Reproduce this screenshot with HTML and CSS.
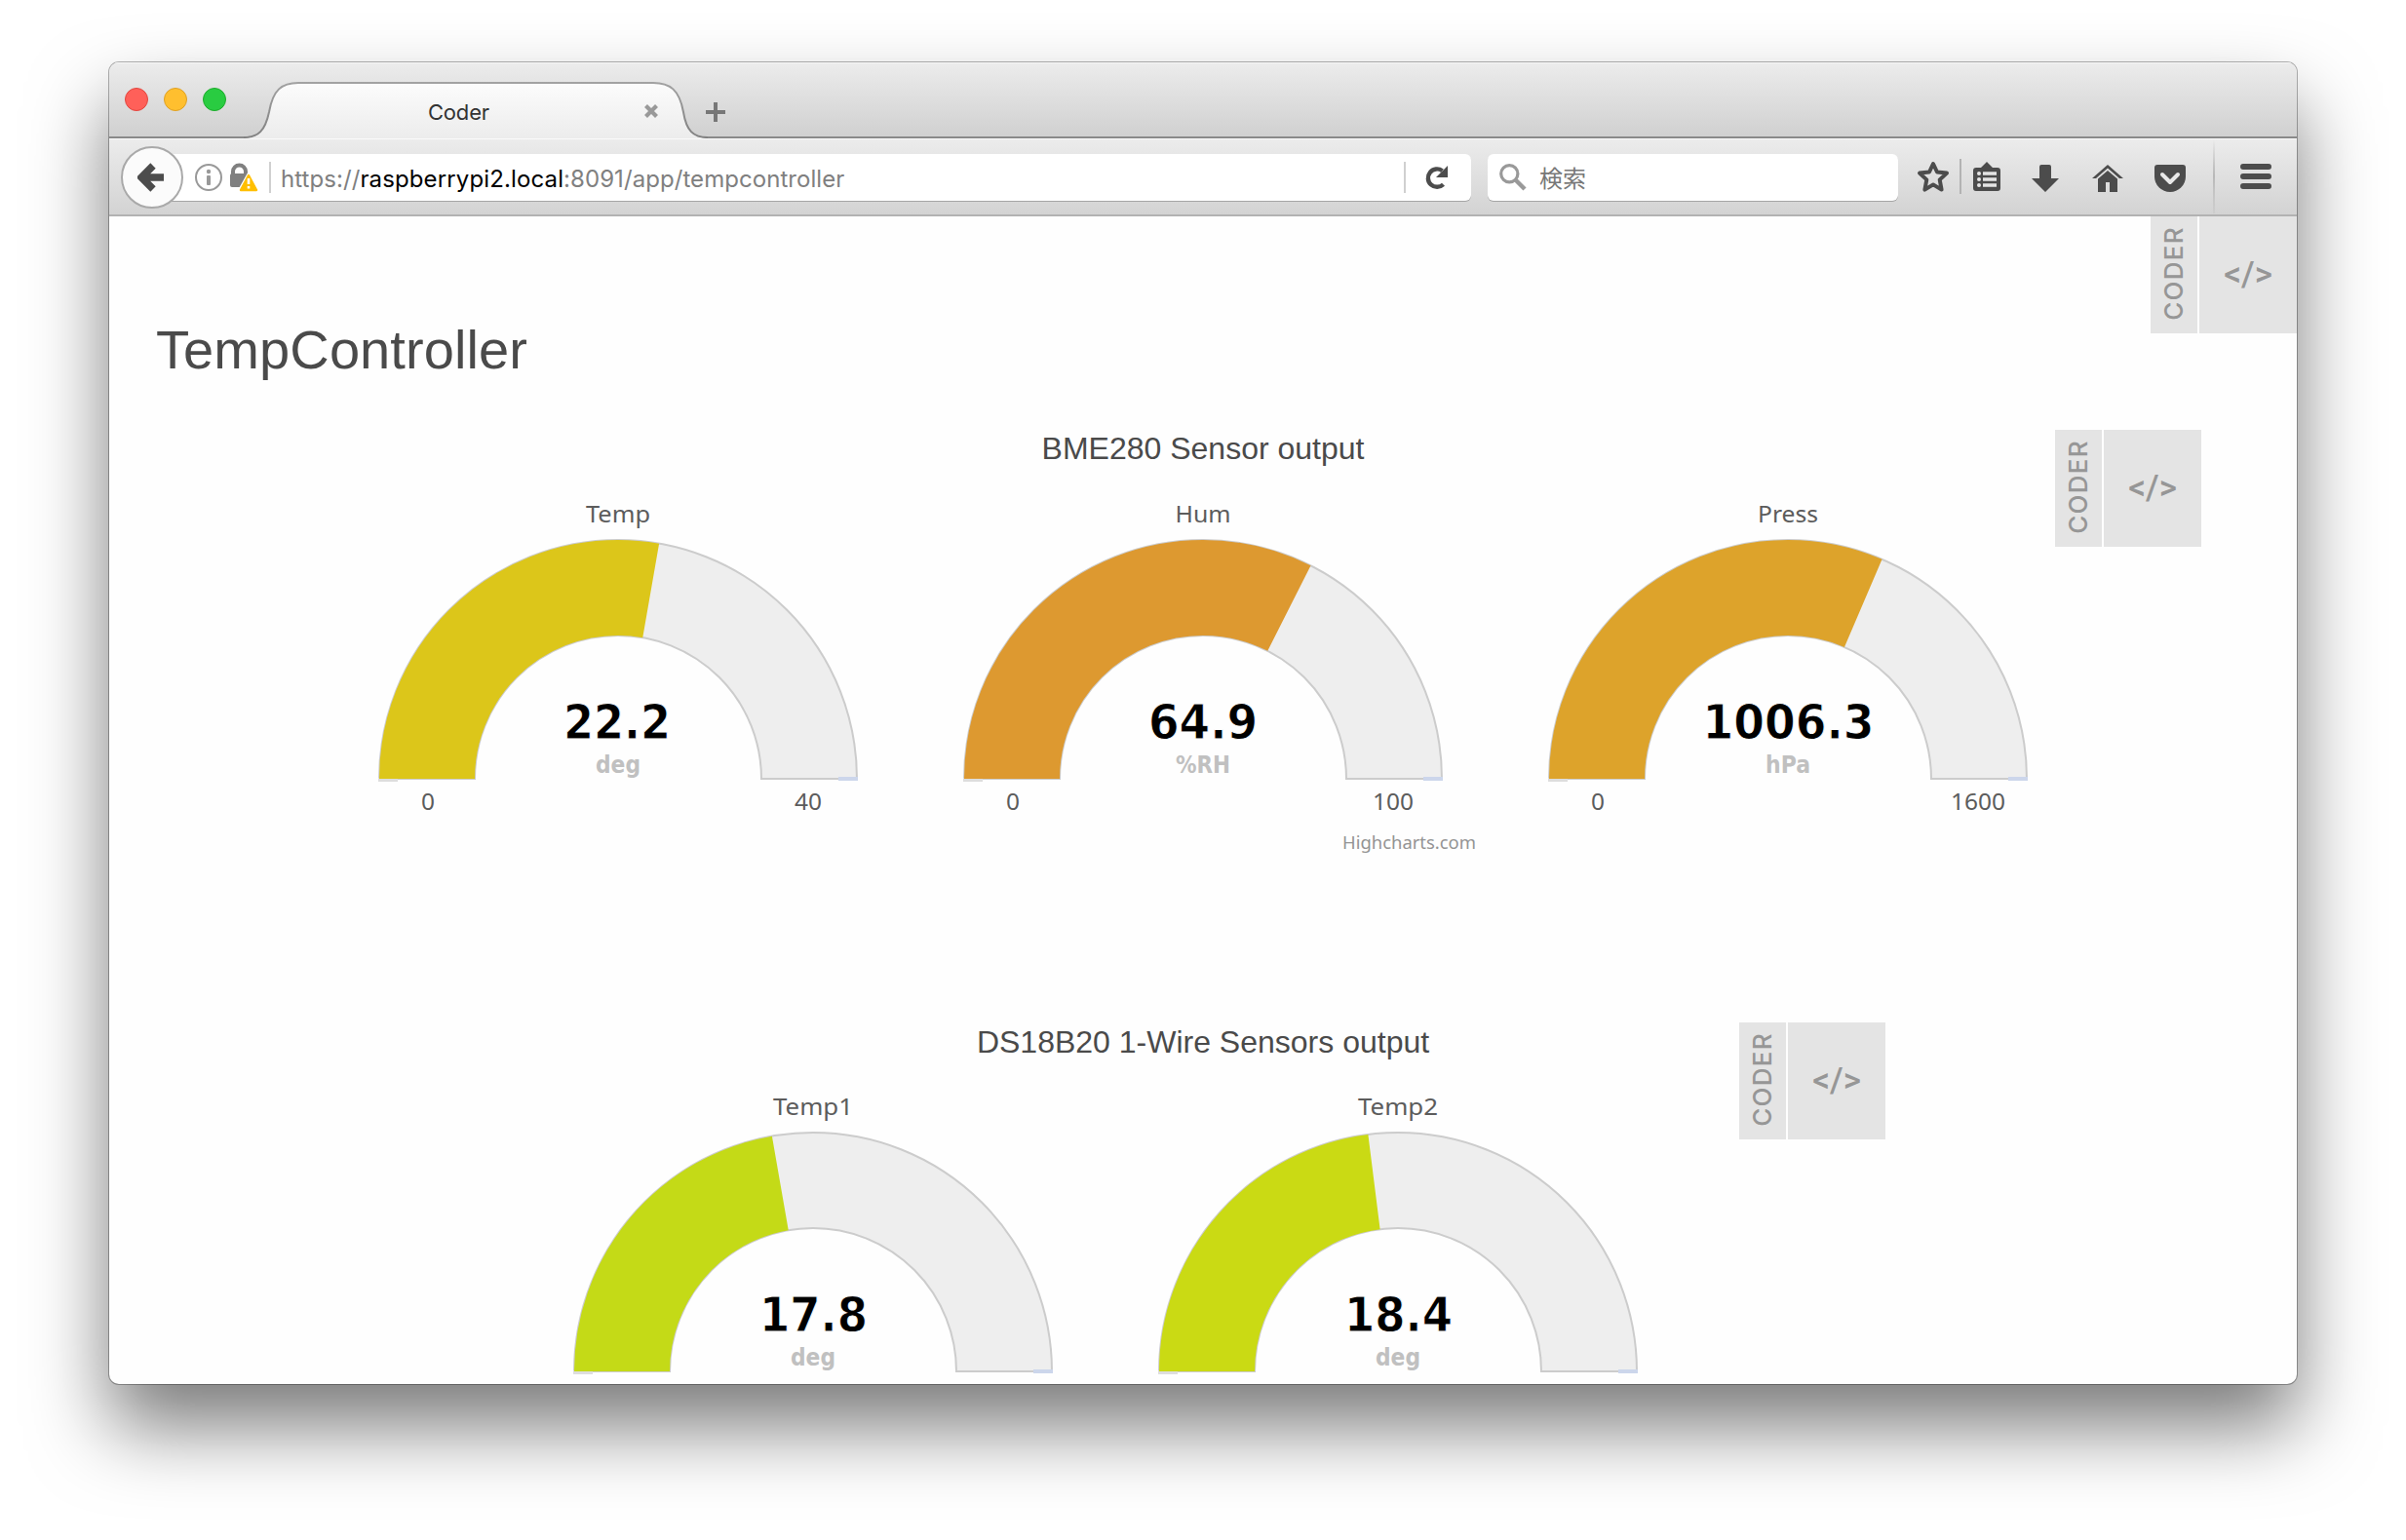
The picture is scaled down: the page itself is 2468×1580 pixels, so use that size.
FILE: index.html
```html
<!DOCTYPE html>
<html lang="ja">
<head>
<meta charset="utf-8">
<title>Coder</title>
<link rel="stylesheet" href="styles.css">
</head>
<body>
<div class="window">
  <header class="tabstrip">
    <svg class="tab-shape" width="476" height="78" viewBox="250 64 476 78">
      <defs><linearGradient id="tabfill" x1="0" y1="0" x2="0" y2="1"><stop offset="0" stop-color="#fcfcfc"/><stop offset="1" stop-color="#ececec"/></linearGradient>
      <linearGradient id="tabline" gradientUnits="userSpaceOnUse" x1="0" y1="84" x2="0" y2="142"><stop offset="0" stop-color="#a2a2a2"/><stop offset="1" stop-color="#808080"/></linearGradient></defs>
      <path fill="url(#tabfill)" d="M250 142C264 141 272 134 276 115C280 92 289 85 306 85H670C687 85 697 92 701 115C704 134 712 141 726 142Z"/>
      <path fill="none" stroke="url(#tabline)" stroke-width="2" d="M250 141C265 141 272 134 276 115C280 92 289 85 306 85H670C687 85 697 92 701 115C704 134 711 141 726 141"/>
    </svg>
    <div class="lights"><i class="red"></i><i class="amber"></i><i class="green"></i></div>
    <div class="tab"><span class="tab-title">Coder</span>
      <svg class="tab-close" width="16" height="16" viewBox="0 0 16 16"><path d="M2.5 2.5L13.5 13.5M13.5 2.5L2.5 13.5" stroke="#999" stroke-width="4.2"/></svg>
    </div>
    <svg class="tab-new" width="20" height="20" viewBox="0 0 20 20"><path d="M0 10H20M10 0V20" stroke="#777" stroke-width="4"/></svg>
  </header>

  <nav class="toolbar">
    <div class="back"><svg width="28" height="32" viewBox="0 0 28 32"><path d="M16 4L4 16L16 28M5 16H27" fill="none" stroke="#4c4c4c" stroke-width="7.6"/></svg></div>
    <div class="urlbar">
      <svg class="ident" width="66" height="32" viewBox="0 0 66 32">
        <circle cx="15" cy="16" r="13" fill="none" stroke="#999" stroke-width="2"/>
        <rect x="13" y="14" width="4" height="10" rx="1" fill="#999"/><circle cx="15" cy="10" r="2.2" fill="#999"/>
        <path d="M40 14V10a6.5 6.5 0 0 1 13 0v4" fill="none" stroke="#808080" stroke-width="4"/>
        <rect x="37" y="12" width="19" height="14" rx="2" fill="#808080"/>
        <path d="M56 13.5L65 29.5H47Z" fill="#fff" stroke="#fff" stroke-width="4"/>
        <path d="M56 14L64 29H48Z" fill="#ffbf00" stroke="#ffbf00" stroke-width="2.4" stroke-linejoin="round"/>
        <path d="M56 17V23M56 25V27.4" stroke="#fff" stroke-width="2.6"/>
      </svg>
      <span class="vline"></span>
      <span class="url">https://<b>raspberrypi2.local</b>:8091/app/tempcontroller</span>
      <span class="vline end"></span>
      <svg class="reload" width="26" height="26" viewBox="0 0 26 26"><path d="M19.5 20.2A9.2 9.2 0 1 1 18.5 6.2" fill="none" stroke="#4c4c4c" stroke-width="4.4"/><path d="M24 1V13H12Z" fill="#4c4c4c"/></svg>
    </div>
    <div class="search">
      <svg width="28" height="28" viewBox="0 0 28 28"><circle cx="10.3" cy="10.3" r="8.6" fill="none" stroke="#999" stroke-width="3.2"/><path d="M16 16L26 26" stroke="#999" stroke-width="4.4"/></svg>
      <span>検索</span>
    </div>
    <svg class="star" width="34" height="34" viewBox="0 0 34 34"><path d="M17 4L21 12.500L31 13.600L23.700 20.400L25.600 30.600L17 25.400L8.400 30.600L10.300 20.400L3 13.600L13 12.500Z" fill="none" stroke="#4c4c4c" stroke-width="4" stroke-linejoin="round"/></svg>
    <span class="vline mid"></span>
    <svg class="clip" width="28" height="30" viewBox="0 0 28 30"><path d="M8 6L14 0L20 6H25A3 3 0 0 1 28 9V27A3 3 0 0 1 25 30H3A3 3 0 0 1 0 27V9A3 3 0 0 1 3 6Z" fill="#4c4c4c"/><path d="M10 12H24M10 18H24M10 24H24" stroke="#e4e4e4" stroke-width="3.4"/><g fill="#e4e4e4"><circle cx="6" cy="12" r="2"/><circle cx="6" cy="18" r="2"/><circle cx="6" cy="24" r="2"/></g></svg>
    <svg class="down" width="28" height="28" viewBox="0 0 28 28"><path d="M10 0H18A2 2 0 0 1 20 2V14H28L14 28L0 14H8V2A2 2 0 0 1 10 0Z" fill="#4c4c4c"/></svg>
    <svg class="home" width="32" height="28" viewBox="0 0 32 28"><path d="M0 14L16 0L32 14H28L16 3.600L4 14Z" fill="#4c4c4c"/><path d="M6 14.500L16 6L26 14.500V28H18V18H14V28H6Z" fill="#4c4c4c"/></svg>
    <svg class="pocket" width="32" height="28" viewBox="0 0 32 28"><path d="M3 0H29A3 3 0 0 1 32 3V12A16 16 0 0 1 0 12V3A3 3 0 0 1 3 0Z" fill="#4c4c4c"/><path d="M8 10L16 18L24 10" fill="none" stroke="#e8e8e8" stroke-width="4" stroke-linecap="round" stroke-linejoin="round"/></svg>
    <span class="menu-line"></span>
    <svg class="menu" width="32" height="26" viewBox="0 0 32 26"><path d="M3 3H29M3 13H29M3 23H29" stroke="#4c4c4c" stroke-width="6" stroke-linecap="round"/></svg>
  </nav>

  <main class="page">
    <div class="coder page-coder"><span class="word"><em>CODER</em></span><span class="code">&lt;/&gt;</span></div>
    <h1>TempController</h1>

    <section class="panel">
      <div class="coder coder-a"><span class="word"><em>CODER</em></span><span class="code">&lt;/&gt;</span></div>
      <h2 class="bme">BME280 Sensor output</h2>
      <div class="charts">
        <svg class="gauge" viewBox="0 0 600 400">
          <path class="track" d="M55 318A245 245 0 0 1 545 318H447A147 147 0 0 0 153 318Z"/>
          <path class="tick0" d="M54 319H74"/><path class="tick1" d="M526 318H546"/>
          <path class="fill" pathLength="100" stroke="#dcc61a" stroke-dasharray="55.5 100" d="M104 318A196 196 0 0 1 496 318"/>
          <text class="name" x="300" y="55" textLength="66" lengthAdjust="spacingAndGlyphs">Temp</text>
          <text class="value" x="299" y="277" textLength="110" lengthAdjust="spacingAndGlyphs">22.2</text>
          <text class="unit" x="300" y="312" textLength="46" lengthAdjust="spacingAndGlyphs">deg</text>
          <text class="lim" x="105" y="350" textLength="14" lengthAdjust="spacingAndGlyphs">0</text><text class="lim" x="495" y="350" textLength="28" lengthAdjust="spacingAndGlyphs">40</text>
        </svg>
        <svg class="gauge" viewBox="0 0 600 400">
          <path class="track" d="M55 318A245 245 0 0 1 545 318H447A147 147 0 0 0 153 318Z"/>
          <path class="tick0" d="M54 319H74"/><path class="tick1" d="M526 318H546"/>
          <path class="fill" pathLength="100" stroke="#dd9930" stroke-dasharray="64.9 100" d="M104 318A196 196 0 0 1 496 318"/>
          <text class="name" x="300" y="55" textLength="57" lengthAdjust="spacingAndGlyphs">Hum</text>
          <text class="value" x="300" y="277" textLength="112" lengthAdjust="spacingAndGlyphs">64.9</text>
          <text class="unit" x="300" y="312" textLength="56" lengthAdjust="spacingAndGlyphs">%RH</text>
          <text class="lim" x="105" y="350" textLength="14" lengthAdjust="spacingAndGlyphs">0</text><text class="lim" x="495" y="350" textLength="42" lengthAdjust="spacingAndGlyphs">100</text>
          <text class="credit" x="580" y="390" textLength="137" lengthAdjust="spacingAndGlyphs">Highcharts.com</text>
        </svg>
        <svg class="gauge" viewBox="0 0 600 400">
          <path class="track" d="M55 318A245 245 0 0 1 545 318H447A147 147 0 0 0 153 318Z"/>
          <path class="tick0" d="M54 319H74"/><path class="tick1" d="M526 318H546"/>
          <path class="fill" pathLength="100" stroke="#dda32b" stroke-dasharray="62.9 100" d="M104 318A196 196 0 0 1 496 318"/>
          <text class="name" x="300" y="55" textLength="62" lengthAdjust="spacingAndGlyphs">Press</text>
          <text class="value" x="300.5" y="277" textLength="176" lengthAdjust="spacingAndGlyphs">1006.3</text>
          <text class="unit" x="300" y="312" textLength="46" lengthAdjust="spacingAndGlyphs">hPa</text>
          <text class="lim" x="105" y="350" textLength="14" lengthAdjust="spacingAndGlyphs">0</text><text class="lim" x="495" y="350" textLength="56" lengthAdjust="spacingAndGlyphs">1600</text>
        </svg>
      </div>
    </section>

    <section class="panel second">
      <div class="coder coder-b"><span class="word"><em>CODER</em></span><span class="code">&lt;/&gt;</span></div>
      <h2 class="ds">DS18B20 1-Wire Sensors output</h2>
      <div class="charts pair">
        <svg class="gauge" viewBox="0 0 600 400">
          <path class="track" d="M55 318A245 245 0 0 1 545 318H447A147 147 0 0 0 153 318Z"/>
          <path class="tick0" d="M54 319H74"/><path class="tick1" d="M526 318H546"/>
          <path class="fill" pathLength="100" stroke="#c4da17" stroke-dasharray="44.5 100" d="M104 318A196 196 0 0 1 496 318"/>
          <text class="name" x="300" y="55" textLength="82" lengthAdjust="spacingAndGlyphs">Temp1</text>
          <text class="value" x="300.5" y="277" textLength="111" lengthAdjust="spacingAndGlyphs">17.8</text>
          <text class="unit" x="300" y="312" textLength="46" lengthAdjust="spacingAndGlyphs">deg</text>
        </svg>
        <svg class="gauge" viewBox="0 0 600 400">
          <path class="track" d="M55 318A245 245 0 0 1 545 318H447A147 147 0 0 0 153 318Z"/>
          <path class="tick0" d="M54 319H74"/><path class="tick1" d="M526 318H546"/>
          <path class="fill" pathLength="100" stroke="#cada14" stroke-dasharray="46 100" d="M104 318A196 196 0 0 1 496 318"/>
          <text class="name" x="300" y="55" textLength="82" lengthAdjust="spacingAndGlyphs">Temp2</text>
          <text class="value" x="300.5" y="277" textLength="111" lengthAdjust="spacingAndGlyphs">18.4</text>
          <text class="unit" x="300" y="312" textLength="46" lengthAdjust="spacingAndGlyphs">deg</text>
        </svg>
      </div>
    </section>
  </main>
</div>
</body>
</html>
```
FILE: styles.css
```css
* { box-sizing: border-box; }
html, body { margin: 0; height: 1580px; overflow: hidden; background: #fff; }
body { padding: 64px 112px 160px; }
svg { display: block; flex: none; }

.window {
  width: 2244px; height: 1356px;
  display: flex; flex-direction: column;
  border-radius: 10px; overflow: hidden; background: #fefefe;
  box-shadow: 0 0 0 1px rgba(0,0,0,.3), 0 44px 80px rgba(0,0,0,.52);
}

/* tab strip */
.tabstrip {
  position: relative; flex: none; height: 78px; display: flex;
  background: linear-gradient(#ececec, #d1d1d1 74px);
  border-bottom: 2px solid #8a8a8a;
  box-shadow: inset 0 1px #f8f8f8;
}
.tab-shape { position: absolute; left: 138px; top: 0; }
.lights { display: flex; gap: 16px; padding: 26px 0 0 16px; }
.lights i { width: 24px; height: 24px; border-radius: 50%; }
.red { background: #ff6059; border: 1px solid #e2463f; }
.amber { background: #ffbf2f; border: 1px solid #dfa023; }
.green { background: #29cc41; border: 1px solid #1dac2b; }
.tab { position: relative; display: flex; margin-left: 207px; width: 237px; justify-content: space-between; }
.tab-title { margin-top: 37px; font: 22px/28px Inter, sans-serif; color: #333; letter-spacing: -.2px; }
.tab-close { margin-top: 42px; }
.tab-new { margin: 41px 0 0 48px; }

/* toolbar */
.toolbar {
  flex: none; height: 80px; display: flex; align-items: center;
  background: linear-gradient(#ececec, #d3d3d3);
  border-bottom: 2px solid #b2b2b2;
  box-shadow: inset 0 1px #fafafa;
}
.back {
  position: relative; z-index: 1; flex: none; width: 64px; height: 64px; margin: 2px 0 0 12px;
  border: 2px solid #a9a9a9; border-radius: 50%; background: #fbfbfb;
  display: flex; align-items: center; justify-content: center;
}
.back svg { margin-right: 3px; }
.urlbar, .search { flex: none; height: 48px; margin-top: 2px; display: flex; align-items: center; background: #fff; box-shadow: 0 1px #a5a5a5; }
.urlbar { width: 1353px; margin-left: -32px; padding-left: 43px; border-radius: 0 6px 6px 0; }
.vline { flex: none; width: 2px; height: 32px; background: #d0d0d0; }
.urlbar .vline { margin-left: 11px; }
.url { width: 1162px; padding: 3px 0 0 10px; font: 24px/32px Inter, sans-serif; letter-spacing: .06px; color: #808080; white-space: nowrap; }
.url b { font-weight: 400; color: #000; letter-spacing: .13px; }
.urlbar .end { margin-left: 0; }
.reload { margin-left: 19px; }
.search { width: 421px; margin-left: 17px; padding-left: 12px; gap: 13px; border-radius: 6px; margin-right: -1px; }
.search span { font: 24px/32px "Noto Sans CJK JP", sans-serif; color: #777; }
.star { margin-left: 20px; }
.mid { height: 36px; margin-left: 10px; background: #b3b3b3; }
.clip { margin-left: 12px; }
.down { margin: 3px 0 0 32px; }
.home { margin: 3px 0 0 34px; }
.pocket { margin: 3px 0 0 32px; }
.menu-line { width: 2px; height: 76px; margin-left: 28px; background: linear-gradient(rgba(0,0,0,0), #b8b8b8 50%, rgba(0,0,0,.03)); }
.menu { margin: 0 0 0 26px; }

/* page */
.page { position: relative; flex: 1; min-height: 0; overflow: hidden; font-family: "Liberation Sans", Arial, sans-serif; color: #4a4a4a; }
h1 { margin: 0; padding: 105px 0 0 48px; font-size: 56px; line-height: 64px; font-weight: 400; height: 219px; letter-spacing: .1px; }
.panel { position: relative; height: 608px; text-align: center; }
h2 { margin: 0; font-size: 32px; line-height: 40px; font-weight: 400; height: 40px; }
.bme { line-height: 38px; }
.charts { display: flex; justify-content: center; }
.pair { padding-right: 200px; }
.gauge { width: 600px; height: 400px; }
.track { fill: #eee; stroke: #ccc; stroke-width: 2; }
.fill { fill: none; stroke-width: 98; }
.tick0 { stroke: #ddd; stroke-width: 4; }
.tick1 { stroke: #ccd6eb; stroke-width: 4; }
.gauge text { text-anchor: middle; font-family: "DejaVu Sans", sans-serif; }
.gauge .name { font-family: "Noto Sans", sans-serif; font-size: 24px; fill: #5c5c5c; }
.gauge .value { font-size: 50px; font-weight: 700; fill: #000; stroke: #fefefe; stroke-width: .9; }
.gauge .unit { font-size: 24px; font-weight: 700; fill: #c0c0c0; }
.gauge .lim { font-family: "Noto Sans", sans-serif; font-size: 23px; fill: #5c5c5c; }
.gauge .credit { font-family: "Noto Sans", sans-serif; font-size: 18px; fill: #949494; text-anchor: end; }

/* floating coder badges */
.coder { position: absolute; display: flex; gap: 2px; height: 120px; color: #969696; font-family: Roboto, sans-serif; font-weight: 500; }
.page-coder { right: 0; top: 0; }
.coder-a { right: 98px; top: 0; }
.coder-b { right: 422px; top: 0; }
.word { width: 48px; background: #e4e4e4; display: flex; align-items: center; justify-content: center; padding-bottom: 3px; }
.word em { font-style: normal; font-family: Inter, sans-serif; font-size: 26px; line-height: 30px; letter-spacing: 1.3px; writing-mode: vertical-rl; transform: rotate(180deg); }
.code { width: 100px; background: #e4e4e4; font-size: 35px; line-height: 120px; text-align: center; }
```
